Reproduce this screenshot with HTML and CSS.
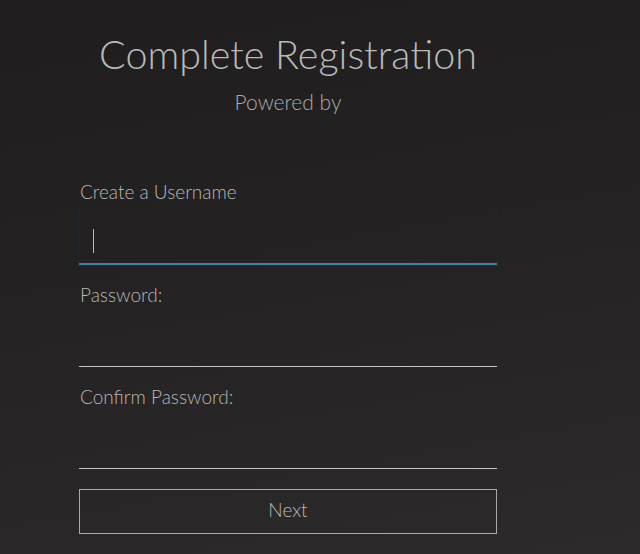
FILE: index.html
```html
<!DOCTYPE html>
<html lang="en">

<head>
  <meta charset="utf-8" />
  <meta name="viewport" content="width=device-width, initial-scale=1.0">
  <title>Complete Registration</title>
  <link rel="stylesheet" href="styles.css">
</head>

<body>

  <main class="register">
    <header class="register-head">
      <h1>Complete Registration</h1>
      <p>Powered by</p>
    </header>

    <form class="register-form">
      <div class="field">
        <label for="username">Create a Username</label>
        <div class="input focused"><span class="caret"></span></div>
      </div>
      <div class="field">
        <label for="password">Password:</label>
        <div class="input"></div>
      </div>
      <div class="field">
        <label for="confirm">Confirm Password:</label>
        <div class="input"></div>
      </div>
      <button type="button" class="next">Next</button>
    </form>
  </main>

</body>

</html>
```

FILE: styles.css
```css
html,
body {
  height: 100%;
}

body {
  font-family: Lato, "Open Sans", Arial, sans-serif;
  margin: 0;
  padding: 0;
  color: #b4b4b4;
  background: linear-gradient(170deg, #1f1d1e 0%, #242223 45%, #2c2a2b 100%);
  overflow: hidden;
}

.register {
  width: 418px;
  margin-left: 79px;
  padding-top: 26px;
}

.register-head {
  text-align: center;
}

.register-head h1 {
  margin: 0;
  font-size: 39.5px;
  font-weight: 300;
  line-height: 56px;
  color: #bababa;
}

.register-head p {
  margin: 6px 0 0;
  font-size: 21px;
  font-weight: 300;
  line-height: 28px;
  color: #ababab;
}

.register-form {
  margin-top: 64px;
}

.field {
  margin-bottom: 18px;
}

.field label {
  display: block;
  padding-left: 1px;
  font-size: 19px;
  font-weight: 300;
  line-height: 24px;
  color: #b8b8b8;
}

.input {
  height: 59px;
  border-bottom: 1px solid #c4c4c4;
  position: relative;
}

.input.focused {
  border-bottom: 2px solid #4d7c9c;
  height: 59px;
  box-shadow: 0 1px 2px #1c3444;
}

.caret {
  position: absolute;
  left: 14px;
  top: 25px;
  width: 1px;
  height: 24px;
  background: #b8b8b8;
}

.next {
  display: block;
  width: 100%;
  height: 45px;
  margin-top: 20px;
  padding: 0 0 4px;
  background: transparent;
  border: 1px solid #a9a9a9;
  font-family: inherit;
  font-size: 19px;
  font-weight: 300;
  color: #b8b8b8;
}
```
